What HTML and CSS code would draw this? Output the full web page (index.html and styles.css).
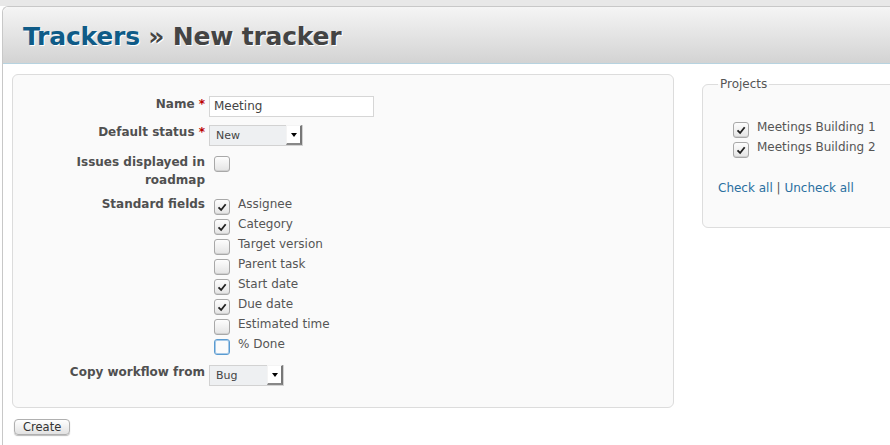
FILE: index.html
```html
<!DOCTYPE html>
<html>
<head>
<meta charset="utf-8">
<link rel="stylesheet" href="styles.css">
</head>
<body>
<div class="topstrip"></div>
<div class="page">
  <div class="header">
    <h2><a class="crumb" href="#">Trackers</a> » New tracker</h2>
  </div>
  <div class="content">
    <div class="left">
      <div class="box tabular">
        <div class="row">
          <label class="lbl">Name <span class="req">*</span></label>
          <div class="field"><div class="textin">Meeting</div></div>
        </div>
        <div class="row">
          <label class="lbl">Default status <span class="req">*</span></label>
          <div class="field"><div class="select w94"><span class="sv">New</span><span class="arr"><i></i></span></div></div>
        </div>
        <div class="row">
          <label class="lbl lbl2">Issues displayed in<br>roadmap</label>
          <div class="field"><span class="cb top3"></span></div>
        </div>
        <div class="row">
          <label class="lbl">Standard fields</label>
          <div class="field list">
            <div class="ck"><span class="cb on"><svg viewBox="0 0 16 16"><path d="M4 8.4 L7 11.4 L12.2 4.8"/></svg></span><span>Assignee</span></div>
            <div class="ck"><span class="cb on"><svg viewBox="0 0 16 16"><path d="M4 8.4 L7 11.4 L12.2 4.8"/></svg></span><span>Category</span></div>
            <div class="ck"><span class="cb"></span><span>Target version</span></div>
            <div class="ck"><span class="cb"></span><span>Parent task</span></div>
            <div class="ck"><span class="cb on"><svg viewBox="0 0 16 16"><path d="M4 8.4 L7 11.4 L12.2 4.8"/></svg></span><span>Start date</span></div>
            <div class="ck"><span class="cb on"><svg viewBox="0 0 16 16"><path d="M4 8.4 L7 11.4 L12.2 4.8"/></svg></span><span>Due date</span></div>
            <div class="ck"><span class="cb"></span><span>Estimated time</span></div>
            <div class="ck"><span class="cb focus"></span><span>% Done</span></div>
          </div>
        </div>
        <div class="row">
          <label class="lbl">Copy workflow from</label>
          <div class="field"><div class="select w75"><span class="sv">Bug</span><span class="arr"><i></i></span></div></div>
        </div>
      </div>
      <button class="btn">Create</button>
    </div>
    <fieldset class="projects">
      <legend>Projects</legend>
      <div class="plist">
        <div class="ck"><span class="cb on"><svg viewBox="0 0 16 16"><path d="M4 8.4 L7 11.4 L12.2 4.8"/></svg></span><span>Meetings Building 1</span></div>
        <div class="ck"><span class="cb on"><svg viewBox="0 0 16 16"><path d="M4 8.4 L7 11.4 L12.2 4.8"/></svg></span><span>Meetings Building 2</span></div>
      </div>
      <p class="links"><a href="#">Check all</a> | <a href="#">Uncheck all</a></p>
    </fieldset>
  </div>
</div>
</body>
</html>
```
FILE: styles.css
```css
html, body {
  margin: 0;
  padding: 0;
  background: #fff;
  overflow: hidden;
}
body {
  font-family: "DejaVu Sans", Verdana, sans-serif;
  font-size: 12px;
  color: #555;
  width: 890px;
  height: 445px;
}
a { color: #2a6fa0; text-decoration: none; }
.topstrip {
  height: 6px;
  background: #e8e8e8;
}
.page {
  margin-left: 2px;
  border-left: 1px solid #c8c8c8;
  border-top: 1px solid #c8c8c8;
  border-top-left-radius: 6px;
  height: 460px;
}
.header {
  background: linear-gradient(#f5f5f5, #d3d3d3);
  border-bottom: 1px solid #b7d3e0;
  border-top-left-radius: 6px;
  padding-left: 20px;
  box-sizing: border-box;
  height: 57px;
}
.header h2 {
  margin: 0;
  padding-top: 15px;
  font-size: 25px;
  line-height: 30px;
  font-weight: bold;
  color: #444;
  text-shadow: 1px 1px 0 #fff;
  letter-spacing: -0.2px;
}
.header .crumb { color: #0f5b87; }
.content {
  display: flex;
  padding: 10px 0 0 9px;
}
.left { width: 662px; flex: none; }
.box {
  border: 1px solid #dcdcdc;
  border-radius: 6px;
  background: #fafafa;
  padding: 18px 0 17px 0;
}
.row {
  display: grid;
  grid-template-columns: 192px auto;
  column-gap: 4px;
  padding: 4px 0;
}
.lbl {
  text-align: right;
  font-weight: bold;
  color: #505050;
  line-height: 14px;
}
.lbl2 { line-height: 18px; margin-top: -1px; }
.req { color: #bb0000; }
.textin {
  width: 159px;
  height: 19px;
  border: 1px solid #d6d6d6;
  background: #fff;
  padding-left: 4px;
  line-height: 19px;
  color: #444;
  margin-top: -1px;
}
.select {
  height: 19px;
  border: 1px solid #d2d2d2;
  background: #eef0f2;
  display: flex;
  justify-content: space-between;
  color: #444;
  font-size: 11px;
}
.w94 { width: 92px; }
.w75 { width: 73px; }
.sv { padding-left: 6px; line-height: 19px; }
.arr {
  width: 13px;
  height: 17px;
  background: #fff;
  border-left: 1px solid #f4f4f4;
  border-top: 1px solid #f4f4f4;
  border-right: 2px solid #777;
  border-bottom: 2px solid #888;
  box-sizing: content-box;
  margin-top: -1px;
  display: flex;
  align-items: center;
  justify-content: center;
}
.arr i {
  width: 0; height: 0;
  border-left: 3px solid transparent;
  border-right: 3px solid transparent;
  border-top: 4px solid #000;
  margin-top: 1px;
}
.cb {
  display: inline-block;
  width: 14px;
  height: 14px;
  border: 1px solid #a8a8a8;
  border-radius: 3px;
  background: linear-gradient(#fdfdfd, #e4e4e4);
  box-shadow: inset 0 -1px 0 #d0d0d0;
  position: relative;
  flex: none;
}
.cb svg {
  position: absolute;
  left: 0; top: 0;
  width: 14px; height: 14px;
}
.cb svg path {
  fill: none;
  stroke: #222;
  stroke-width: 2.1;
}
.cb.focus {
  border-color: #5a9bd0;
  box-shadow: 0 0 0 1px #a6c9e8 inset;
  background: #fbfbfb;
}
.field { margin-left: 0; }
.top3 { margin: 2px 0 0 5px; }
.list { display: flex; flex-direction: column; padding-left: 5px; }
.ck {
  display: flex;
  height: 20px;
  align-items: flex-start;
  gap: 8px;
  line-height: 14px;
}
.ck .cb { margin-top: 2px; }
.btn {
  margin: 11px 0 0 2px;
  font-family: "DejaVu Sans", Verdana, sans-serif;
  font-size: 11.5px;
  color: #333;
  height: 16px;
  line-height: 13px;
  padding: 0 8px;
  border: 1px solid #b0b0b0;
  border-radius: 4px;
  background: linear-gradient(#ffffff, #e2e2e2);
  box-shadow: 0 1px 1px #bbb;
}
.projects {
  margin: 3px 0 0 28px;
  padding: 0 15px 0 15px;
  border: 1px solid #dddddd;
  border-radius: 6px;
  background: #fafafa;
  width: 220px;
  flex: none;
  height: 151px;
  box-sizing: border-box;
}
.projects legend {
  padding: 0 2px;
  color: #555;
  line-height: 14px;
}
.plist {
  margin: 29px 0 0 15px;
}
.links { margin: 21px 0 0 0; }
```
